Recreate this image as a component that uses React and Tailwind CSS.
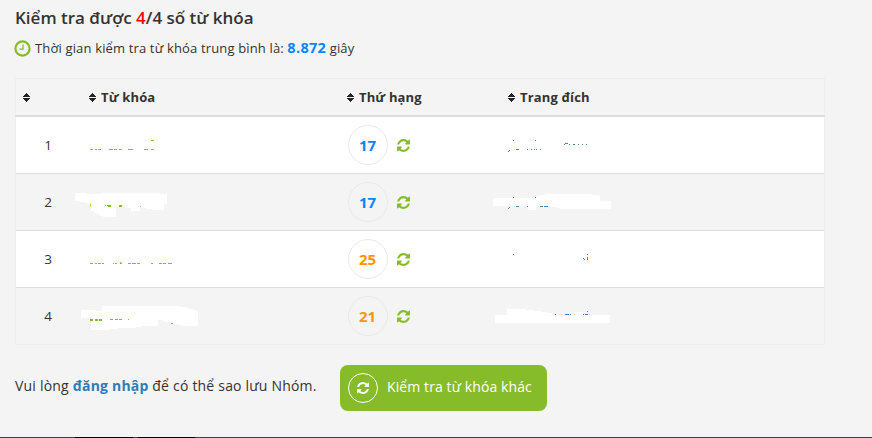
const ROWS = [
  {
    id: 1,
    rank: 17,
    color: "text-[#0a84ff]",
    keyword: {
      marks: [[90, 32, 3, 1], [95, 32, 2, 1], [98, 32, 3, 1], [109, 32, 4, 1], [114, 32, 3, 1], [119, 32, 3, 1], [128, 32, 5, 1], [144, 32, 4, 1], [151, 32, 3, 1], [151, 23, 3, 1]],
    },
    target: {
      marks: [[509, 33, 1, 1], [508, 34, 1, 1], [513, 23, 1, 1], [516, 32, 3, 1], [527, 32, 1, 1], [531, 32, 1, 1], [534, 32, 1, 1], [536, 32, 1, 1], [540, 32, 1, 1], [535, 23, 1, 1], [565, 26, 3, 1], [564, 27, 1, 1], [569, 27, 1, 1], [573, 27, 2, 1], [578, 27, 1, 1], [582, 27, 1, 1], [586, 27, 1, 1]],
    },
  },
  {
    id: 2,
    rank: 17,
    color: "text-[#0a84ff]",
    keyword: {
      shape: "75,19 87,19 87,20 101,20 101,19 160,19 160,20 167,20 167,30 164,30 164,36 152,36 152,35 146,35 146,34 140,34 140,37 131,37 131,34 125,34 125,31 122,31 122,33 116,33 116,43 103,43 103,42 100,42 100,40 97,40 97,39 94,39 94,37 91,37 91,29 85,29 85,28 79,28 79,27 75,27",
      marks: [[90, 30, 1, 3, "#e8c94c"], [105, 31, 1, 1], [107, 31, 4, 1], [108, 32, 3, 1], [119, 31, 3, 2], [140, 32, 1, 1, "#7fd3cf"]],
    },
    target: {
      shape: "493,24 533,24 533,23 541,22 541,21 549,20 592,20 592,21 598,21 600,22 600,27 611,27 611,35 560,35 560,34 556,34 556,33 536,33 536,36 528,36 528,32 493,32",
      marks: [[513, 23, 1, 1], [509, 33, 1, 1], [508, 34, 1, 1], [516, 32, 3, 1], [527, 32, 1, 1], [535, 23, 1, 1], [540, 32, 3, 1], [544, 32, 4, 1]],
    },
  },
  {
    id: 3,
    rank: 25,
    color: "text-[#ff9500]",
    keyword: {
      marks: [[90, 32, 3, 1], [95, 32, 2, 1], [98, 32, 3, 1], [102, 32, 2, 1], [113, 32, 1, 1], [115, 32, 2, 1], [120, 32, 2, 1], [120, 31, 1, 1], [128, 32, 3, 1], [132, 32, 4, 1], [137, 32, 3, 1], [151, 32, 2, 1], [159, 32, 3, 1], [163, 32, 3, 1], [168, 32, 4, 1]],
    },
    target: {
      marks: [[513, 23, 1, 1], [583, 27, 1, 1], [584, 28, 1, 1], [587, 23, 1, 1], [587, 26, 1, 3]],
    },
  },
  {
    id: 4,
    rank: 21,
    color: "text-[#ff9500]",
    keyword: {
      shape: "81,22 96,22 96,23 102,23 102,18 179,18 179,19 184,19 190,21 195,22 198,25 198,38 181,38 181,37 176,36 173,34 165,34 165,33 158,32 158,38 141,38 141,39 136,39 136,40 118,40 118,41 110,41 110,42 91,42 91,30 81,30",
      marks: [[90, 31, 3, 2], [95, 31, 3, 2], [99, 31, 3, 2], [110, 31, 3, 1], [115, 31, 3, 1], [119, 31, 3, 1], [128, 31, 1, 1], [171, 35, 2, 1]],
    },
    target: {
      shape: "495,27 507,27 507,21 522,21 530,22 537,23 545,24 551,25 555,27 575,27 575,24 583,24 583,27 610,27 610,35 495,35",
      marks: [[555, 26, 1, 1], [565, 26, 4, 1], [570, 26, 1, 1], [574, 26, 1, 1, "#e9b9a0"], [583, 26, 1, 1], [585, 26, 3, 1], [587, 23, 1, 1]],
    },
  },
];

function RefreshIcon({ className }) {
  return (
    <svg viewBox="0 0 1536 1536" className={className} fill="currentColor">
      <path d="M1511 928q0 5-1 7-64 268-268 434.500t-478 166.500q-146 0-282.500-55t-243.500-157l-129 129q-19 19-45 19t-45-19-19-45v-448q0-26 19-45t45-19h448q26 0 45 19t19 45-19 45l-137 137q71 66 161 102t187 36q134 0 250-65t186-179q11-17 53-117 8-23 30-23h192q13 0 22.500 9.500t9.500 22.500zm25-800v448q0 26-19 45t-45 19h-448q-26 0-45-19t-19-45 19-45l138-138q-148-137-349-137-134 0-250 65t-186 179q-11 17-53 117-8 23-30 23h-199q-13 0-22.500-9.500t-9.500-22.500v-7q65-268 270-434.500t480-166.500q146 0 284 55.500t245 156.500l130-129q19-19 45-19t45 19 19 45z" />
    </svg>
  );
}

function ClockIcon() {
  return (
    <svg viewBox="0 0 17 17" className="-ml-px h-[17px] w-[17px] shrink-0 text-[#86bc29]" fill="none" stroke="currentColor">
      <circle cx="8.5" cy="8.5" r="7.1" strokeWidth="2.2" />
      <path d="M9 4.5v4.6H5.5" strokeWidth="1.3" />
    </svg>
  );
}

function SortIcon() {
  return (
    <svg viewBox="0 0 7 9" className="h-[9px] w-[7px] shrink-0" fill="#212529" shapeRendering="crispEdges">
      <path d="M3 0h1v1h1v1h1v1h1v1H0V3h1V2h1V1h1zM0 5h7v1H6v1H5v1H4v1H3V8H2V7H1V6H0z" />
    </svg>
  );
}

// Hidden text: a brushed-out area with the bits that stay visible.
function Masked({ data, left, color }) {
  return (
    <svg width="130" height="56" viewBox={`${left} 0 130 56`} className="shrink-0" shapeRendering="crispEdges">
      {data.shape && <polygon points={data.shape} fill="#fff" />}
      {data.marks.map(([x, y, w, h, fill]) => (
        <rect key={`${x}-${y}`} x={x} y={y} width={w} height={h} fill={fill || color} />
      ))}
    </svg>
  );
}

function Row({ row }) {
  return (
    <div className="grid h-[57px] grid-cols-[65px_258px_161px_1fr] items-center border-b border-[#ddd] odd:bg-white last:h-14 last:border-b-0">
      <span className="pr-px text-center text-[13.5px]">{row.id}</span>
      <div className="-ml-2 flex self-start">
        <Masked data={row.keyword} left={73} color="#86bc29" />
      </div>
      <div className="flex items-center pl-[9px]">
        <span className={`flex h-10 w-10 items-center justify-center rounded-full border border-[#e9e9e9] pr-px text-[15px] font-bold ${row.color}`}>
          {row.rank}
        </span>
        <RefreshIcon className="ml-[9px] h-[13px] w-[13px] text-[#86bc29]" />
      </div>
      <div className="-ml-2 flex self-start">
        <Masked data={row.target} left={492} color="#4a80b5" />
      </div>
    </div>
  );
}

function HeadCell({ children }) {
  return (
    <div className="flex items-center gap-[5px] pl-2">
      <SortIcon />
      <span>{children}</span>
    </div>
  );
}

export default function App() {
  return (
    <div className="flex h-[438px] w-[872px] flex-col overflow-hidden bg-[#f4f4f4] font-['Open_Sans','Noto_Sans',sans-serif] text-[13.5px] text-[#333]">
      <div className="px-[15px] pt-[6px]">
        <h1 className="h-6 text-[17px] leading-6 font-semibold whitespace-nowrap">
          Kiểm tra được <span className="text-[#f00]">4</span>/4 số từ khóa
        </h1>
        <div className="mt-2 flex h-5 items-center gap-1 leading-5 whitespace-nowrap">
          <ClockIcon />
          <p className="text-[13px] tracking-[0.15px]">
            Thời gian kiểm tra từ khóa trung bình là:{" "}
            <b className="text-[14.5px] tracking-[0.3px] text-[#0a84ff]">8.872</b> giây
          </p>
        </div>
      </div>

      <div className="mt-5 ml-[15px] h-[267px] w-[810px] border border-[#eee]">
        <div className="-mx-px grid h-[38px] grid-cols-[66px_258px_161px_1fr] items-center border-b-2 border-[#ddd] pt-px text-[13px] font-bold tracking-[0.15px]">
          <HeadCell />
          <HeadCell>Từ khóa</HeadCell>
          <HeadCell>Thứ hạng</HeadCell>
          <HeadCell>Trang đích</HeadCell>
        </div>
        <div>
          {ROWS.map((row) => (
            <Row key={row.id} row={row} />
          ))}
        </div>
      </div>

      <div className="mt-5 flex h-[46px] items-center pl-[15px]">
        <p className="w-[325px] shrink-0 pb-[6px] text-[14px] tracking-[0.2px] whitespace-nowrap">
          Vui lòng <a className="font-bold text-[#337ab7]">đăng nhập</a> để có thể sao lưu Nhóm.
        </p>
        <button className="flex h-[46px] w-[207px] items-center rounded-lg bg-[#86bc29] pl-2 text-[14px] whitespace-nowrap text-white">
          <span className="flex h-[30px] w-[30px] shrink-0 items-center justify-center rounded-full border border-white">
            <RefreshIcon className="h-3 w-3" />
          </span>
          <span className="ml-[9px] pb-[4px] tracking-[0.1px]">Kiểm tra từ khóa khác</span>
        </button>
      </div>

      <div className="mt-auto flex h-px bg-[#2b4257]">
        <div className="ml-[75px] w-[58px] bg-black" />
        <div className="ml-[5px] w-[57px] bg-black" />
      </div>
    </div>
  );
}
